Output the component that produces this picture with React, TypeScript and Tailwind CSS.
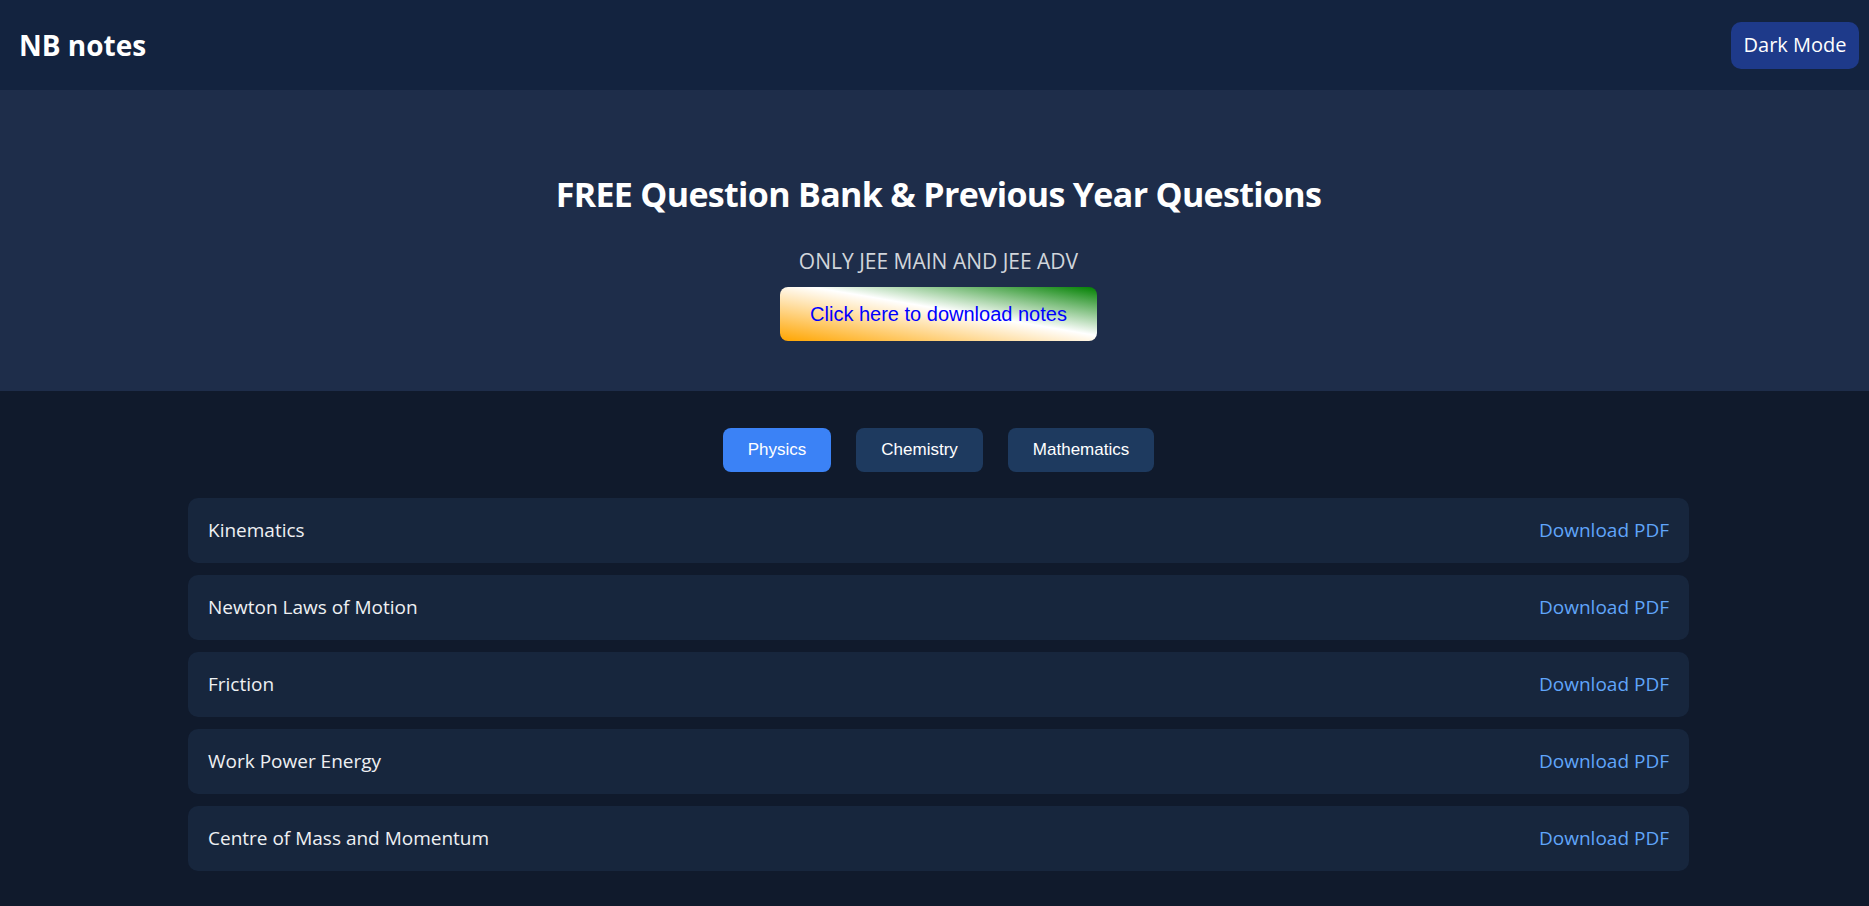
import React, { useState } from 'react';

const topics = [
  'Kinematics',
  'Newton Laws of Motion',
  'Friction',
  'Work Power Energy',
  'Centre of Mass and Momentum',
];

const tabs = ['Physics', 'Chemistry', 'Mathematics'];

const App = () => {
  const [active, setActive] = useState('Physics');

  return (
    <div className="min-h-screen bg-[#101a2c] font-['Segoe_UI','Open_Sans',sans-serif]">
      <header className="flex h-[90px] items-center justify-between bg-[#13233f] pl-[19px] pr-[10px]">
        <h1 className="text-[28px] font-bold text-white">NB notes</h1>
        <button className="h-[47px] w-[128px] rounded-[10px] bg-[#1e3a8a] text-[20px] text-white">
          Dark Mode
        </button>
      </header>

      <section className="flex flex-col items-center bg-[#1e2d4a] pt-[81px] pb-[50px] pl-[8px]">
        <h2 className="text-[34px] leading-[46px] font-bold tracking-[-0.02em] text-white">
          FREE Question Bank &amp; Previous Year Questions
        </h2>
        <p className="mt-[29px] text-[21px] leading-[30px] text-[#d1d5db]">ONLY JEE MAIN AND JEE ADV</p>
        <button className="mt-[11px] h-[54px] w-[317px] rounded-[8px] bg-[linear-gradient(to_top_right,#ffa500,#ffffff_55%,#008000)] font-['Liberation_Sans',Arial,sans-serif] text-[20px] text-[#0000ff]">
          Click here to download notes
        </button>
      </section>

      <main className="flex flex-col items-center pt-[37px] pb-[35px] pl-[8px]">
        <div className="flex gap-[25px] font-['Liberation_Sans',Arial,sans-serif]">
          {tabs.map((t) => (
            <button
              key={t}
              onClick={() => setActive(t)}
              className={
                active === t
                  ? 'h-[44px] rounded-[8px] bg-[#3b82f6] px-[25px] text-[17px] text-white'
                  : 'h-[44px] rounded-[8px] bg-[#1e3a5f] px-[25px] text-[17px] text-white'
              }
            >
              {t}
            </button>
          ))}
        </div>

        <div className="mt-[26px] flex w-[1501px] flex-col gap-[12px]">
          {topics.map((topic) => (
            <div
              key={topic}
              className="flex h-[65px] items-center justify-between rounded-[10px] bg-[#17263d] px-[20px]"
            >
              <span className="text-[19px] text-[#eef0f3]">{topic}</span>
              <a href="#" className="text-[19px] text-[#60a5fa]">
                Download PDF
              </a>
            </div>
          ))}
        </div>
      </main>
    </div>
  );
};

export default App;
